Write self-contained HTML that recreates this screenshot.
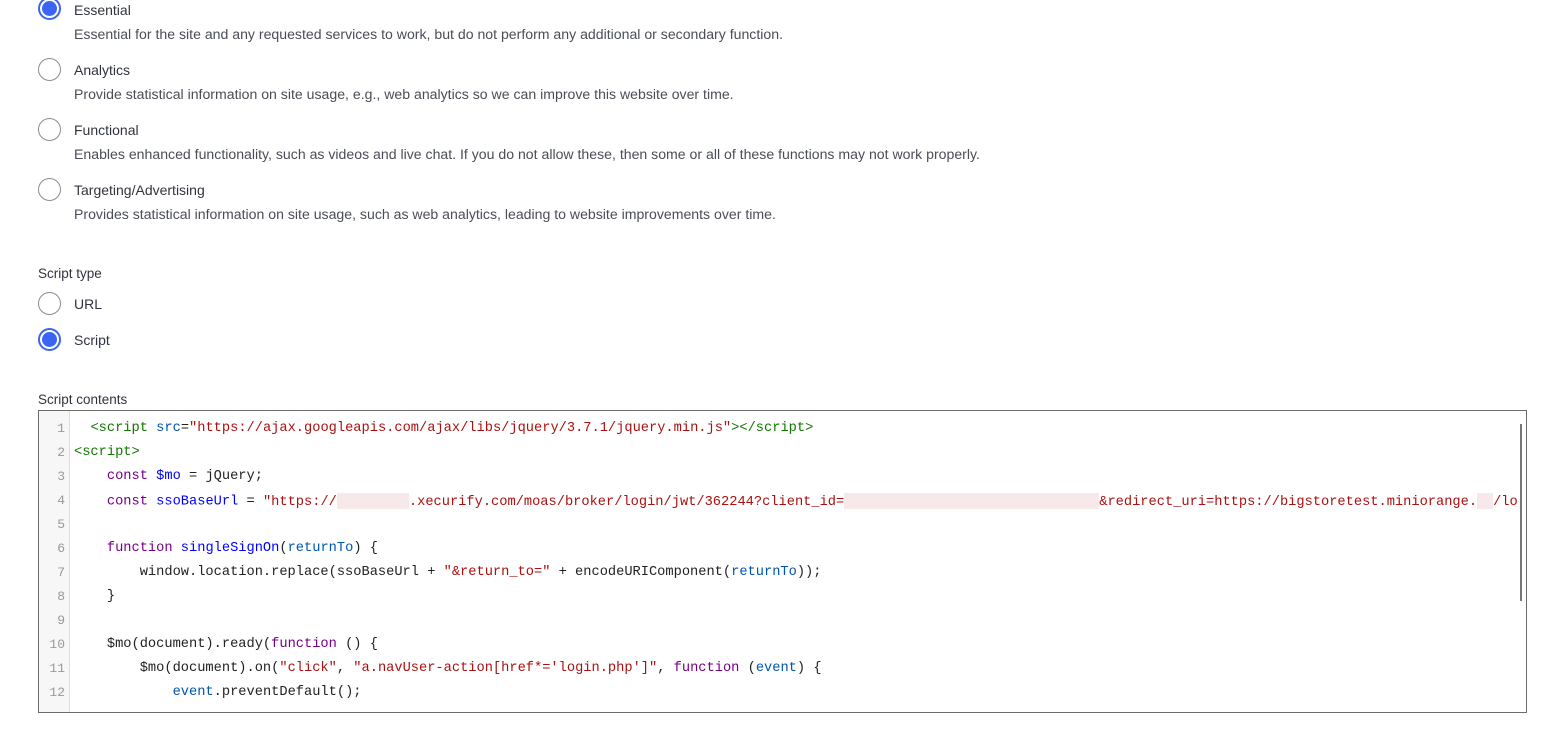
<!DOCTYPE html>
<html><head><style>
body{margin:0;background:#fff;font-family:"Liberation Sans",sans-serif;width:1568px;height:754px;overflow:hidden;position:relative;color:#313440}
.r{position:absolute;left:38px;width:23px;height:23px;border:1.5px solid #8c8c8c;border-radius:50%;box-sizing:border-box;background:#fff}
.r.on{border:2px solid #3c64f4;}
.r.on::after{content:"";position:absolute;left:2px;top:2px;width:15px;height:15px;border-radius:50%;background:#3c64f4}
.t{position:absolute;left:74px;font-size:14px;white-space:nowrap}
.d{color:#4a4d57;font-size:14.1px}
.s{position:absolute;left:38px;font-size:13.5px}
.box{position:absolute;left:38px;top:410px;width:1489px;height:303px;border:1px solid #6b6b6b;box-sizing:border-box;overflow:hidden}
.g{position:absolute;left:0;top:0;width:30px;height:100%;background:#f7f7f7;border-right:1px solid #ddd}
.ln{position:absolute;left:0;width:26px;text-align:right;font-family:"Liberation Mono",monospace;font-size:13px;color:#999}
.c{position:absolute;left:35px;font-family:"Liberation Mono",monospace;font-size:13.7px;white-space:pre;color:#222}
.tg{color:#117700}.st{color:#aa1111}.kw{color:#770088}.vr{color:#0055aa}.df{color:#0000ff}
.bl{display:inline-block;background:#f7e9ea;height:16px;vertical-align:middle}
.sb{position:absolute;right:4px;top:13px;width:2px;height:177px;background:#777}
</style></head><body>
<div class="r on" style="top:-3px"></div><div class="t" style="top:2px">Essential</div>
<div class="t d" style="top:26px">Essential for the site and any requested services to work, but do not perform any additional or secondary function.</div>
<div class="r" style="top:58px"></div><div class="t" style="top:62px">Analytics</div>
<div class="t d" style="top:86px">Provide statistical information on site usage, e.g., web analytics so we can improve this website over time.</div>
<div class="r" style="top:118px"></div><div class="t" style="top:122px">Functional</div>
<div class="t d" style="top:146px">Enables enhanced functionality, such as videos and live chat. If you do not allow these, then some or all of these functions may not work properly.</div>
<div class="r" style="top:178px"></div><div class="t" style="top:182px">Targeting/Advertising</div>
<div class="t d" style="top:206px">Provides statistical information on site usage, such as web analytics, leading to website improvements over time.</div>
<div class="s" style="top:266px">Script type</div>
<div class="r" style="top:292px"></div><div class="t" style="top:296px">URL</div>
<div class="r on" style="top:328px"></div><div class="t" style="top:332px">Script</div>
<div class="s" style="top:392px">Script contents</div>
<div class="box"><div class="g"></div>
<div class="ln" style="top:10px">1</div><div class="ln" style="top:34px">2</div><div class="ln" style="top:58px">3</div><div class="ln" style="top:82px">4</div><div class="ln" style="top:106px">5</div><div class="ln" style="top:130px">6</div><div class="ln" style="top:154px">7</div><div class="ln" style="top:178px">8</div><div class="ln" style="top:202px">9</div><div class="ln" style="top:226px">10</div><div class="ln" style="top:250px">11</div><div class="ln" style="top:274px">12</div>
<div class="c" style="top:10px">  <span class="tg">&lt;script</span> <span class="vr">src</span>=<span class="st">"https://ajax.googleapis.com/ajax/libs/jquery/3.7.1/jquery.min.js"</span><span class="tg">&gt;&lt;/script&gt;</span></div>
<div class="c" style="top:34px"><span class="tg">&lt;script&gt;</span></div>
<div class="c" style="top:58px">    <span class="kw">const</span> <span class="df">$mo</span> = jQuery;</div>
<div class="c" style="top:82px">    <span class="kw">const</span> <span class="df">ssoBaseUrl</span> = <span class="st">"https://<span class="bl" style="width:72px"></span>.xecurify.com/moas/broker/login/jwt/362244?client_id=<span class="bl" style="width:255px"></span>&amp;redirect_uri=https://bigstoretest.miniorange.<span class="bl" style="width:16px"></span>/lo</span></div>
<div class="c" style="top:130px">    <span class="kw">function</span> <span class="df">singleSignOn</span>(<span class="vr">returnTo</span>) {</div>
<div class="c" style="top:154px">        window.location.replace(ssoBaseUrl + <span class="st">"&amp;return_to="</span> + encodeURIComponent(<span class="vr">returnTo</span>));</div>
<div class="c" style="top:178px">    }</div>
<div class="c" style="top:226px">    $mo(document).ready(<span class="kw">function</span> () {</div>
<div class="c" style="top:250px">        $mo(document).on(<span class="st">"click"</span>, <span class="st">"a.navUser-action[href*='login.php']"</span>, <span class="kw">function</span> (<span class="vr">event</span>) {</div>
<div class="c" style="top:274px">            <span class="vr">event</span>.preventDefault();</div>
<div class="sb"></div>
</div>
</body></html>
